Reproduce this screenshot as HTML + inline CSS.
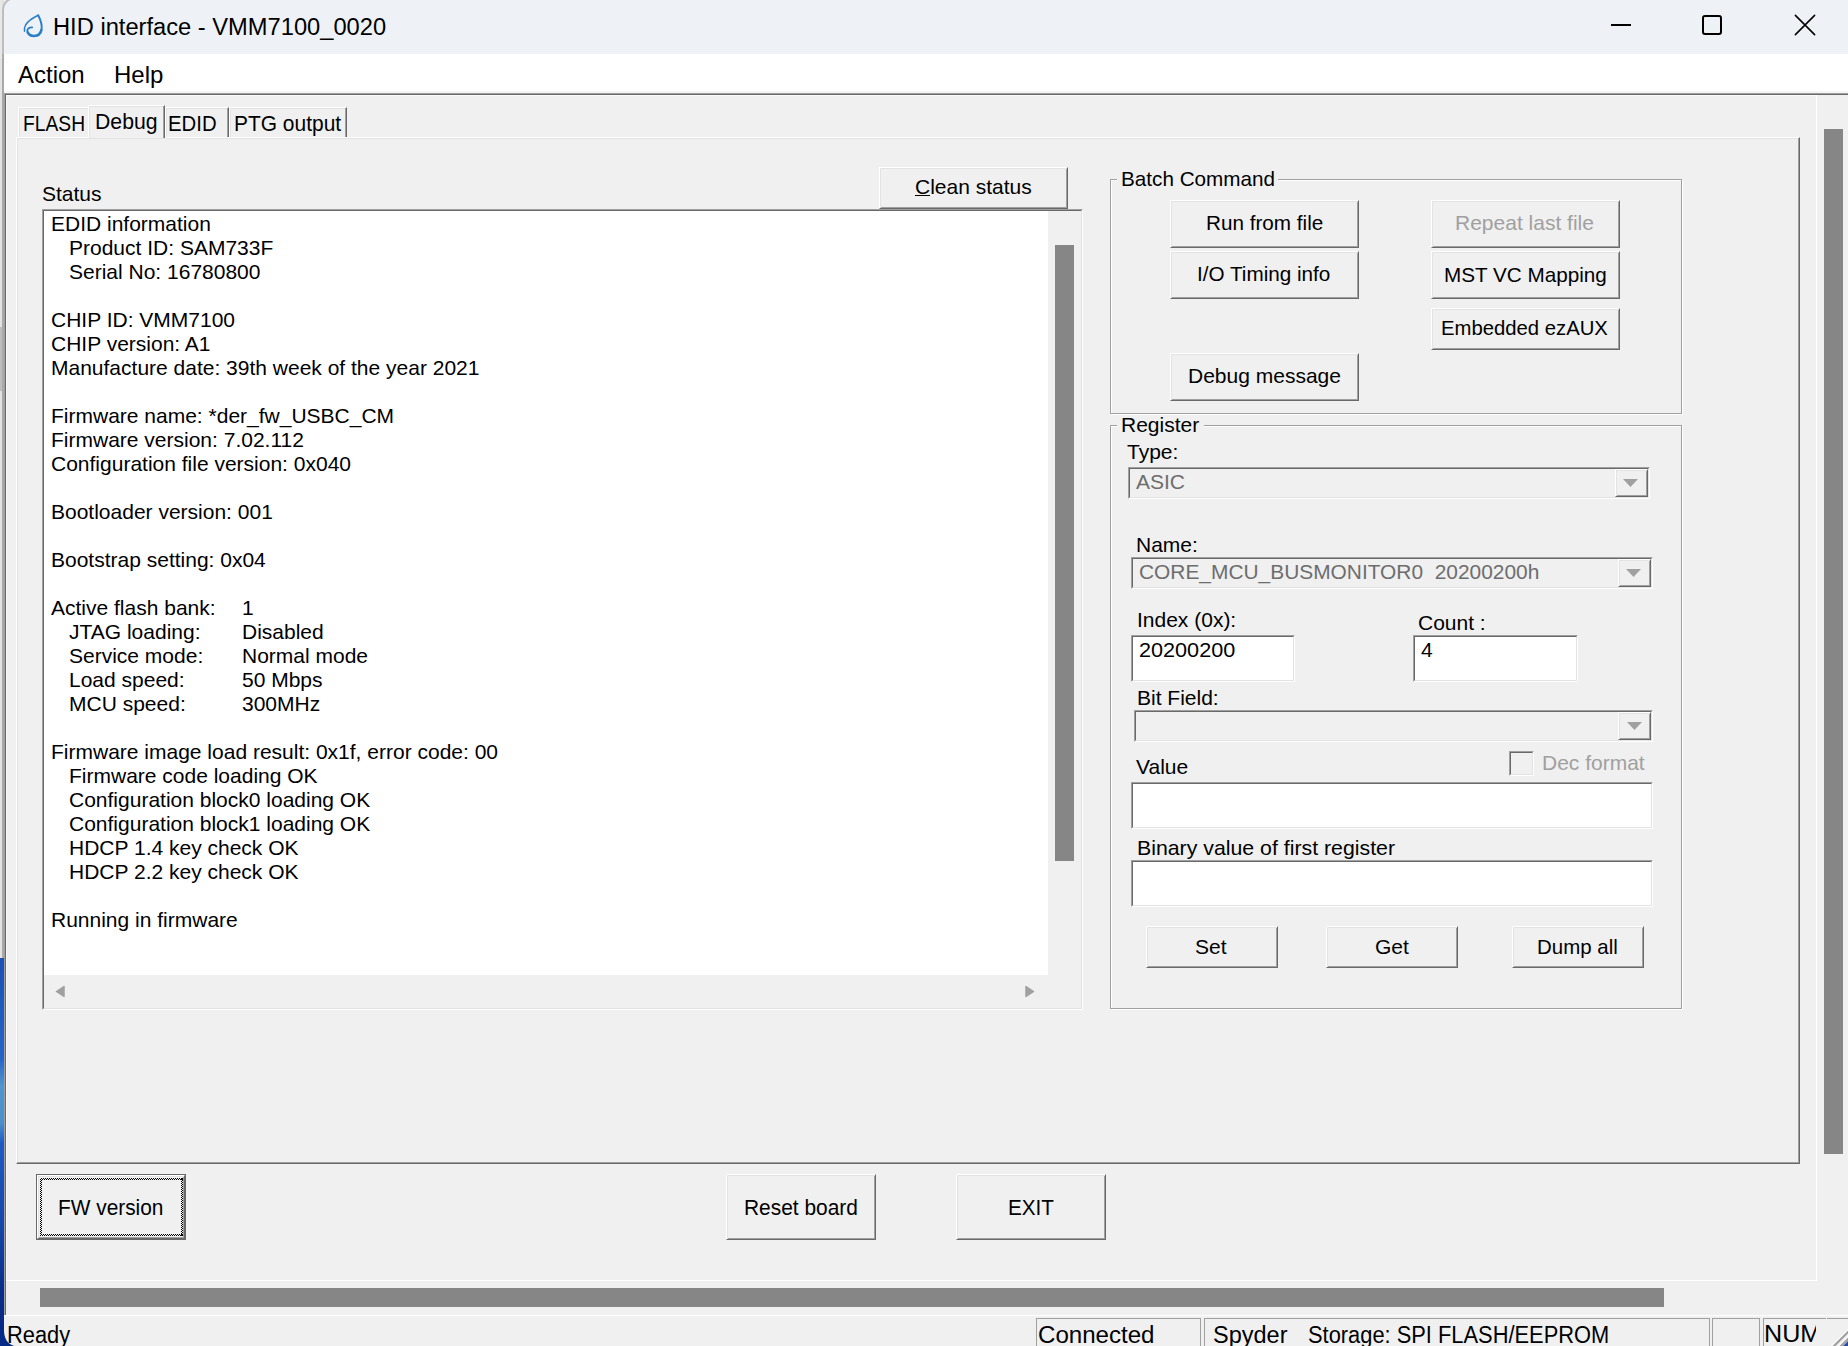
<!DOCTYPE html>
<html><head><meta charset="utf-8"><style>
html,body{margin:0;padding:0;}
body{width:1848px;height:1346px;position:relative;overflow:hidden;background:#f0f0f0;font-family:"Liberation Sans",sans-serif;}
.t{position:absolute;white-space:pre;font-family:"Liberation Sans",sans-serif;}
.r{position:absolute;}
.btn{position:absolute;background:#f0f0f0;border-top:1px solid #fff;border-left:1px solid #fff;border-right:1px solid #696969;border-bottom:1px solid #696969;box-shadow:inset 1px 1px 0 #e3e3e3, inset -1px -1px 0 #a0a0a0;}
.sunk{position:absolute;border-top:1px solid #a0a0a0;border-left:1px solid #a0a0a0;border-right:1px solid #fff;border-bottom:1px solid #fff;}
.sunk::after{content:"";position:absolute;left:0;top:0;right:0;bottom:0;border-top:1px solid #696969;border-left:1px solid #696969;border-right:1px solid #e3e3e3;border-bottom:1px solid #e3e3e3;}
.grp{position:absolute;border:1px solid #a0a0a0;box-shadow:1px 1px 0 #fff, inset 1px 1px 0 #fff;}
.tab{position:absolute;background:#f0f0f0;border-top:1px solid #fff;border-left:1px solid #fff;border-right:1px solid #696969;box-shadow:inset -1px 0 0 #a0a0a0, inset 1px 1px 0 #e3e3e3;}
.tri{position:absolute;width:0;height:0;}
</style></head><body>

<div class="r" style="left:0px;top:0px;width:4px;height:958px;background:#e3e3e3;"></div>
<div class="r" style="left:0px;top:327px;width:2px;height:64px;background:#bdbdbd;"></div>
<div class="r" style="left:2px;top:10px;width:2px;height:948px;background:#a9a9a9;"></div>
<div class="r" style="left:0px;top:57px;width:3px;height:1px;background:#bdbdbd;"></div>
<div class="r" style="left:0px;top:958px;width:4px;height:388px;background:linear-gradient(180deg,#1b4fb6 0px,#2563c8 100px,#4f96cf 128px,#4a90cc 165px,#1f5ac4 185px,#1446a8 272px,#0a2e8c 330px,#062580 388px);"></div>
<div class="r" style="left:0px;top:0px;width:2px;height:58px;background:#e8e8e8;"></div>
<div class="r" style="left:2px;top:-3px;width:1850px;height:55px;background:#eef2f7;border-left:2px solid #bdbdbd;border-top:2px solid #bdbdbd;border-top-left-radius:13px"></div>
<svg class="r" style="left:22px;top:13px" width="24" height="27" viewBox="0 0 24 27">
<path d="M16.2 2.3 C11 4.8 6 8 3.6 12 C2.4 14.2 2.2 16.3 2.5 18.2" fill="none" stroke="#2a7fc6" stroke-width="1.5" stroke-linecap="round"/>
<path d="M16.2 2.3 C18.4 6.5 19.8 10.5 19.7 14.8 C19.6 20 16 23 11.9 23 C8 23 5.3 20.5 5.3 17.8 C5.3 15.6 7.3 14.2 10.1 14.4" fill="none" stroke="#2a7fc6" stroke-width="1.9" stroke-linecap="round"/>
<path d="M19.4 17 C18.5 21 15.5 23 11.9 23 C9 23 6.8 21.5 5.8 19.5" fill="none" stroke="#2a7fc6" stroke-width="2.6" stroke-linecap="round"/>
</svg>
<div class="t " style="left:53px;top:15px;font-size:23.5px;line-height:24px;color:#000;transform:scaleX(1.008);transform-origin:0 0;">HID interface - VMM7100_0020</div>
<div class="r" style="left:1611px;top:24px;width:20px;height:2px;background:#000;"></div>
<div class="r" style="left:1702px;top:15px;width:16px;height:16px;border:2px solid #000;border-radius:3px"></div>
<svg class="r" style="left:1793px;top:13px" width="24" height="24" viewBox="0 0 24 24">
<path d="M2.4 2.4 L21.6 21.6 M21.6 2.4 L2.4 21.6" stroke="#000" stroke-width="1.6" stroke-linecap="round"/></svg>
<div class="r" style="left:4px;top:54px;width:1844px;height:37px;background:#ffffff;"></div>
<div class="r" style="left:4px;top:91px;width:1844px;height:2px;background:#f5f5f5;"></div>
<div class="t " style="left:18px;top:63px;font-size:24px;line-height:24px;color:#000;">Action</div>
<div class="t " style="left:114px;top:63px;font-size:24px;line-height:24px;color:#000;">Help</div>
<div class="r" style="left:4px;top:93px;width:1844px;height:1px;background:#a0a0a0;"></div>
<div class="r" style="left:5px;top:94px;width:1843px;height:1px;background:#696969;"></div>
<div class="r" style="left:4px;top:93px;width:1px;height:1222px;background:#a0a0a0;"></div>
<div class="r" style="left:5px;top:94px;width:1px;height:1221px;background:#696969;"></div>
<div class="r" style="left:6px;top:95px;width:1811px;height:1px;background:#fafafa;"></div>
<div class="r" style="left:6px;top:95px;width:1px;height:1186px;background:#fafafa;"></div>
<div class="r" style="left:1816px;top:95px;width:1px;height:1186px;background:#ffffff;"></div>
<div class="r" style="left:6px;top:1280px;width:1811px;height:1px;background:#ffffff;"></div>
<div class="r" style="left:16px;top:137px;width:1782px;height:1025px;border-top:1px solid #fff;border-left:1px solid #fff;border-right:1px solid #696969;border-bottom:1px solid #696969;box-shadow:inset -1px -1px 0 #a0a0a0, inset 1px 1px 0 #e3e3e3"></div>
<div class="tab" style="left:18px;top:107px;width:69px;height:29px;border-right:none;box-shadow:inset 1px 1px 0 #e3e3e3"></div>
<div class="tab" style="left:165px;top:107px;width:62px;height:29px"></div>
<div class="tab" style="left:229px;top:107px;width:116px;height:29px"></div>
<div class="tab" style="left:88px;top:105px;width:75px;height:32px;box-shadow:inset -1px 0 0 #a0a0a0, inset 1px 1px 0 #e3e3e3"></div>
<div class="t " style="left:23px;top:113px;font-size:22px;line-height:22px;color:#000;transform:scaleX(0.875);transform-origin:0 0;">FLASH</div>
<div class="t " style="left:95px;top:111px;font-size:22px;line-height:22px;color:#000;transform:scaleX(0.965);transform-origin:0 0;">Debug</div>
<div class="t " style="left:168px;top:113px;font-size:22px;line-height:22px;color:#000;transform:scaleX(0.925);transform-origin:0 0;">EDID</div>
<div class="t " style="left:234px;top:113px;font-size:22px;line-height:22px;color:#000;transform:scaleX(0.952);transform-origin:0 0;">PTG output</div>
<div class="t " style="left:42px;top:183px;font-size:21px;line-height:21px;color:#000;">Status</div>
<div class="sunk" style="left:42px;top:209px;width:1039px;height:799px;background:#f0f0f0"></div>
<div class="r" style="left:44px;top:211px;width:1004px;height:764px;background:#ffffff;"></div>
<div class="btn" style="left:879px;top:167px;width:187px;height:40px"></div>
<div class="t " style="left:915px;top:176px;font-size:21px;line-height:21px;color:#000;">Clean status</div>
<div class="r" style="left:915px;top:195px;width:15px;height:1px;background:#000;"></div>
<div class="r" style="left:1055px;top:245px;width:19px;height:616px;background:#868686;"></div>
<svg class="r" style="left:55px;top:985px" width="11" height="13"><path d="M9 1.5 L1.5 6.5 L9 11.5 Z" fill="#a0a0a0" stroke="#a0a0a0" stroke-width="1.5" stroke-linejoin="round"/></svg>
<svg class="r" style="left:1024px;top:985px" width="11" height="13"><path d="M2 1.5 L9.5 6.5 L2 11.5 Z" fill="#a0a0a0" stroke="#a0a0a0" stroke-width="1.5" stroke-linejoin="round"/></svg>
<div class="t " style="left:51px;top:213px;font-size:21px;line-height:21px;color:#000;">EDID information</div>
<div class="t " style="left:69px;top:237px;font-size:21px;line-height:21px;color:#000;">Product ID: SAM733F</div>
<div class="t " style="left:69px;top:261px;font-size:21px;line-height:21px;color:#000;">Serial No: 16780800</div>
<div class="t " style="left:51px;top:309px;font-size:21px;line-height:21px;color:#000;">CHIP ID: VMM7100</div>
<div class="t " style="left:51px;top:333px;font-size:21px;line-height:21px;color:#000;">CHIP version: A1</div>
<div class="t " style="left:51px;top:357px;font-size:21px;line-height:21px;color:#000;">Manufacture date: 39th week of the year 2021</div>
<div class="t " style="left:51px;top:405px;font-size:21px;line-height:21px;color:#000;">Firmware name: *der_fw_USBC_CM</div>
<div class="t " style="left:51px;top:429px;font-size:21px;line-height:21px;color:#000;">Firmware version: 7.02.112</div>
<div class="t " style="left:51px;top:453px;font-size:21px;line-height:21px;color:#000;">Configuration file version: 0x040</div>
<div class="t " style="left:51px;top:501px;font-size:21px;line-height:21px;color:#000;">Bootloader version: 001</div>
<div class="t " style="left:51px;top:549px;font-size:21px;line-height:21px;color:#000;">Bootstrap setting: 0x04</div>
<div class="t " style="left:51px;top:597px;font-size:21px;line-height:21px;color:#000;">Active flash bank:</div>
<div class="t " style="left:69px;top:621px;font-size:21px;line-height:21px;color:#000;">JTAG loading:</div>
<div class="t " style="left:69px;top:645px;font-size:21px;line-height:21px;color:#000;">Service mode:</div>
<div class="t " style="left:69px;top:669px;font-size:21px;line-height:21px;color:#000;">Load speed:</div>
<div class="t " style="left:69px;top:693px;font-size:21px;line-height:21px;color:#000;">MCU speed:</div>
<div class="t " style="left:51px;top:741px;font-size:21px;line-height:21px;color:#000;">Firmware image load result: 0x1f, error code: 00</div>
<div class="t " style="left:69px;top:765px;font-size:21px;line-height:21px;color:#000;">Firmware code loading OK</div>
<div class="t " style="left:69px;top:789px;font-size:21px;line-height:21px;color:#000;">Configuration block0 loading OK</div>
<div class="t " style="left:69px;top:813px;font-size:21px;line-height:21px;color:#000;">Configuration block1 loading OK</div>
<div class="t " style="left:69px;top:837px;font-size:21px;line-height:21px;color:#000;">HDCP 1.4 key check OK</div>
<div class="t " style="left:69px;top:861px;font-size:21px;line-height:21px;color:#000;">HDCP 2.2 key check OK</div>
<div class="t " style="left:51px;top:909px;font-size:21px;line-height:21px;color:#000;">Running in firmware</div>
<div class="t " style="left:242px;top:597px;font-size:21px;line-height:21px;color:#000;">1</div>
<div class="t " style="left:242px;top:621px;font-size:21px;line-height:21px;color:#000;">Disabled</div>
<div class="t " style="left:242px;top:645px;font-size:21px;line-height:21px;color:#000;">Normal mode</div>
<div class="t " style="left:242px;top:669px;font-size:21px;line-height:21px;color:#000;">50 Mbps</div>
<div class="t " style="left:242px;top:693px;font-size:21px;line-height:21px;color:#000;">300MHz</div>
<div class="grp" style="left:1110px;top:179px;width:570px;height:233px"></div>
<div class="r" style="left:1117px;top:179px;width:161px;height:2px;background:#f0f0f0;"></div>
<div class="t " style="left:1121px;top:168px;font-size:21px;line-height:21px;color:#000;transform:scaleX(0.985);transform-origin:0 0;">Batch Command</div>
<div class="btn" style="left:1170px;top:200px;width:187px;height:46px"></div>
<div class="t " style="left:1206px;top:212px;font-size:21px;line-height:21px;color:#000;transform:scaleX(0.985);transform-origin:0 0;">Run from file</div>
<div class="btn" style="left:1170px;top:251px;width:187px;height:46px"></div>
<div class="t " style="left:1197px;top:263px;font-size:21px;line-height:21px;color:#000;transform:scaleX(0.985);transform-origin:0 0;">I/O Timing info</div>
<div class="btn" style="left:1431px;top:200px;width:187px;height:46px"></div>
<div class="t " style="left:1455px;top:212px;font-size:21px;line-height:21px;color:#a0a0a0;">Repeat last file</div>
<div class="btn" style="left:1431px;top:251px;width:187px;height:46px"></div>
<div class="t " style="left:1444px;top:264px;font-size:21px;line-height:21px;color:#000;transform:scaleX(0.985);transform-origin:0 0;">MST VC Mapping</div>
<div class="btn" style="left:1431px;top:308px;width:187px;height:40px"></div>
<div class="t " style="left:1441px;top:317px;font-size:21px;line-height:21px;color:#000;transform:scaleX(0.966);transform-origin:0 0;">Embedded ezAUX</div>
<div class="btn" style="left:1170px;top:353px;width:187px;height:46px"></div>
<div class="t " style="left:1188px;top:365px;font-size:21px;line-height:21px;color:#000;">Debug message</div>
<div class="grp" style="left:1110px;top:425px;width:570px;height:582px"></div>
<div class="r" style="left:1117px;top:425px;width:87px;height:2px;background:#f0f0f0;"></div>
<div class="t " style="left:1121px;top:414px;font-size:21px;line-height:21px;color:#000;">Register</div>
<div class="t " style="left:1127px;top:441px;font-size:21px;line-height:21px;color:#000;">Type:</div>
<div class="sunk" style="left:1128px;top:467px;width:520px;height:30px;background:#f0f0f0"></div>
<div class="btn" style="left:1615px;top:469px;width:31px;height:26px"></div>
<svg class="r" style="left:1622px;top:478px" width="17" height="10"><path d="M1 1 L16 1 L8.5 9 Z" fill="#a0a0a0"/></svg>
<div class="t " style="left:1136px;top:471px;font-size:21px;line-height:21px;color:#6d6d6d;">ASIC</div>
<div class="t " style="left:1136px;top:534px;font-size:21px;line-height:21px;color:#000;">Name:</div>
<div class="sunk" style="left:1131px;top:557px;width:520px;height:30px;background:#f0f0f0"></div>
<div class="btn" style="left:1618px;top:559px;width:31px;height:26px"></div>
<svg class="r" style="left:1625px;top:568px" width="17" height="10"><path d="M1 1 L16 1 L8.5 9 Z" fill="#a0a0a0"/></svg>
<div class="t " style="left:1139px;top:561px;font-size:21px;line-height:21px;color:#6d6d6d;transform:scaleX(0.995);transform-origin:0 0;">CORE_MCU_BUSMONITOR0  20200200h</div>
<div class="t " style="left:1137px;top:609px;font-size:21px;line-height:21px;color:#000;">Index (0x):</div>
<div class="sunk" style="left:1131px;top:635px;width:162px;height:45px;background:#fff"></div>
<div class="t " style="left:1139px;top:639px;font-size:21px;line-height:21px;color:#000;transform:scaleX(1.03);transform-origin:0 0;">20200200</div>
<div class="t " style="left:1418px;top:612px;font-size:21px;line-height:21px;color:#000;">Count :</div>
<div class="sunk" style="left:1413px;top:635px;width:163px;height:45px;background:#fff"></div>
<div class="t " style="left:1421px;top:639px;font-size:21px;line-height:21px;color:#000;">4</div>
<div class="t " style="left:1137px;top:687px;font-size:21px;line-height:21px;color:#000;">Bit Field:</div>
<div class="sunk" style="left:1134px;top:710px;width:517px;height:30px;background:#f0f0f0"></div>
<div class="btn" style="left:1618px;top:712px;width:31px;height:26px"></div>
<svg class="r" style="left:1626px;top:721px" width="17" height="10"><path d="M1 1 L16 1 L8.5 9 Z" fill="#a0a0a0"/></svg>
<div class="t " style="left:1136px;top:756px;font-size:21px;line-height:21px;color:#000;">Value</div>
<div class="sunk" style="left:1509px;top:751px;width:23px;height:23px;background:#f0f0f0"></div>
<div class="t " style="left:1542px;top:752px;font-size:21px;line-height:21px;color:#a0a0a0;">Dec format</div>
<div class="sunk" style="left:1131px;top:782px;width:520px;height:45px;background:#fff"></div>
<div class="t " style="left:1137px;top:837px;font-size:21px;line-height:21px;color:#000;transform:scaleX(1.014);transform-origin:0 0;">Binary value of first register</div>
<div class="sunk" style="left:1131px;top:860px;width:520px;height:45px;background:#fff"></div>
<div class="btn" style="left:1146px;top:926px;width:130px;height:40px"></div>
<div class="t " style="left:1195px;top:936px;font-size:21px;line-height:21px;color:#000;">Set</div>
<div class="btn" style="left:1326px;top:926px;width:130px;height:40px"></div>
<div class="t " style="left:1375px;top:936px;font-size:21px;line-height:21px;color:#000;">Get</div>
<div class="btn" style="left:1512px;top:926px;width:130px;height:40px"></div>
<div class="t " style="left:1537px;top:936px;font-size:21px;line-height:21px;color:#000;transform:scaleX(0.975);transform-origin:0 0;">Dump all</div>
<div class="r" style="left:36px;top:1174px;width:148px;height:64px;border:1px solid #696969;background:#f0f0f0"></div>
<div class="btn" style="left:37px;top:1175px;width:146px;height:62px"></div>
<div class="r" style="left:40px;top:1178px;width:143px;height:2px;background:repeating-conic-gradient(#000 0 25%, transparent 0 50%) 0 0/2px 2px"></div>
<div class="r" style="left:40px;top:1234px;width:143px;height:2px;background:repeating-conic-gradient(#000 0 25%, transparent 0 50%) 0 0/2px 2px"></div>
<div class="r" style="left:40px;top:1178px;width:2px;height:58px;background:repeating-conic-gradient(#000 0 25%, transparent 0 50%) 0 0/2px 2px"></div>
<div class="r" style="left:181px;top:1178px;width:2px;height:58px;background:repeating-conic-gradient(#000 0 25%, transparent 0 50%) 0 0/2px 2px"></div>
<div class="t " style="left:58px;top:1197px;font-size:22px;line-height:22px;color:#000;transform:scaleX(0.948);transform-origin:0 0;">FW version</div>
<div class="btn" style="left:726px;top:1174px;width:148px;height:64px"></div>
<div class="t " style="left:744px;top:1197px;font-size:22px;line-height:22px;color:#000;transform:scaleX(0.95);transform-origin:0 0;">Reset board</div>
<div class="btn" style="left:956px;top:1174px;width:148px;height:64px"></div>
<div class="t " style="left:1008px;top:1197px;font-size:22px;line-height:22px;color:#000;transform:scaleX(0.94);transform-origin:0 0;">EXIT</div>
<div class="r" style="left:1824px;top:129px;width:19px;height:1025px;background:#868686;"></div>
<div class="r" style="left:40px;top:1288px;width:1624px;height:19px;background:#868686;"></div>
<div class="r" style="left:4px;top:1315px;width:1844px;height:1px;background:#ffffff;"></div>
<div class="r" style="left:4px;top:1316px;width:1844px;height:30px;background:#f0f0f0;"></div>
<div class="r" style="left:1036px;top:1318px;width:163px;height:40px;border-top:1px solid #a0a0a0;border-left:1px solid #a0a0a0;border-right:1px solid #a0a0a0"></div>
<div class="r" style="left:1204px;top:1318px;width:504px;height:40px;border-top:1px solid #a0a0a0;border-left:1px solid #a0a0a0;border-right:1px solid #a0a0a0"></div>
<div class="r" style="left:1712px;top:1318px;width:46px;height:40px;border-top:1px solid #a0a0a0;border-left:1px solid #a0a0a0;border-right:1px solid #a0a0a0"></div>
<div class="r" style="left:1763px;top:1318px;width:61px;height:40px;border-top:1px solid #a0a0a0;border-left:1px solid #a0a0a0;border-right:1px solid #a0a0a0"></div>
<div class="r" style="left:1824px;top:1319px;width:2px;height:27px;background:#f0f0f0;"></div>
<div class="r" style="left:1827px;top:1318px;width:21px;height:28px;border-top:1px solid #a0a0a0"></div>
<div class="t " style="left:7px;top:1323px;font-size:23.5px;line-height:24px;color:#000;transform:scaleX(0.93);transform-origin:0 0;">Ready</div>
<div class="t " style="left:1038px;top:1323px;font-size:23.5px;line-height:24px;color:#000;transform:scaleX(1.025);transform-origin:0 0;">Connected</div>
<div class="t " style="left:1213px;top:1323px;font-size:23.5px;line-height:24px;color:#000;">Spyder</div>
<div class="t " style="left:1308px;top:1323px;font-size:23.5px;line-height:24px;color:#000;transform:scaleX(0.93);transform-origin:0 0;">Storage: SPI FLASH/EEPROM</div>
<div class="r" style="left:1764px;top:1319px;width:52px;height:27px;overflow:hidden"><div class="t" style="left:0px;top:3px;font-size:23.5px;line-height:24px;transform:scaleX(1.07);transform-origin:0 0">NUM</div></div>
<svg class="r" style="left:1820px;top:1318px" width="28" height="28" viewBox="0 0 28 28">
<path d="M29 11 L11 29 M29 18 L18 29" stroke="#fff" stroke-width="1.5"/>
<path d="M29 13 L13 29 M29 20 L20 29" stroke="#a0a0a0" stroke-width="2.2"/>
<path d="M28 23 L23 28 L28 28 Z" fill="#2a4f9a"/></svg>
<svg class="r" style="left:0;top:1330px" width="14" height="16"><path d="M4 0 C4 9 8 14 14 16 L0 16 L0 0 Z" fill="#062a88"/></svg>
</body></html>
